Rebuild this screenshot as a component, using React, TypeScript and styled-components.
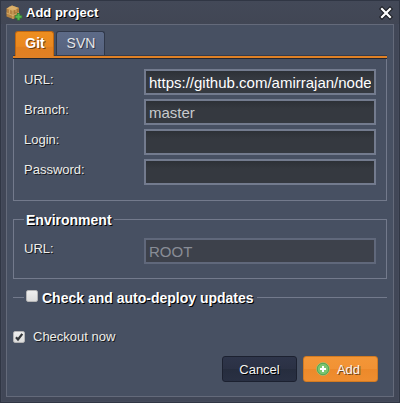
import React from "react";
import styled, { createGlobalStyle } from "styled-components";

const GlobalStyle = createGlobalStyle`
  * { box-sizing: border-box; }
  html, body { margin: 0; padding: 0; overflow: hidden; background: #414755; }
  body, input, button { font-family: "Liberation Sans", Arial, sans-serif; }
`;

const Dialog = styled.div`
  width: 400px;
  height: 403px;
  display: flex;
  flex-direction: column;
  padding: 0 5px 5px;
  border: 1px solid #303644;
  background: #414757;
  box-shadow: inset 0 0 0 1px #454b5b;
  color: #fff;
`;

const Header = styled.header`
  height: 23px;
  flex: none;
  display: flex;
  align-items: center;
  margin: 0 -5px;
  padding: 0 6px 0 5px;
  background: linear-gradient(#434958, #414654);
`;

const Title = styled.h1`
  flex: 1;
  margin: 1px 0 0 3px;
  font-size: 13px;
  line-height: 16px;
  font-weight: bold;
  text-shadow: 1px 1px 0 #000;
`;

const CloseButton = styled.button`
  width: 14px;
  height: 14px;
  padding: 0;
  border: 0;
  background: none;
  display: flex;
`;

const Body = styled.main`
  flex: 1;
  display: flex;
  flex-direction: column;
  border: 1px solid #646a7a;
  background: #475062;
  padding: 6px 6px 0;
`;

const TabBar = styled.nav`
  display: flex;
  gap: 2px;
  height: 25px;
  padding-left: 2px;
  border-bottom: 1px solid #343b4b;
`;

const Tab = styled.button<{ $active?: boolean }>`
  width: ${(p) => (p.$active ? 39 : 49)}px;
  height: ${(p) => (p.$active ? 25 : 24)}px;
  padding: 0 0 2px 1px;
  border: 1px solid ${(p) => (p.$active ? "#c0670f" : "#303849")};
  border-bottom: 0;
  border-radius: 3px 3px 0 0;
  background: ${(p) =>
    p.$active
      ? "linear-gradient(#ed8e20, #ea881f 60%, #e07f20 62%, #e08024)"
      : "linear-gradient(#5d6b88, #56627e)"};
  color: ${(p) => (p.$active ? "#fff" : "#e4e5e8")};
  font-size: 14px;
  line-height: 22px;
  font-weight: ${(p) => (p.$active ? "bold" : "normal")};
  text-shadow: 1px 1px 0 ${(p) => (p.$active ? "#744011" : "#30384a")};
`;

const TabLine = styled.div`
  height: 3px;
  flex: none;
  background: #e08125;
  border-bottom: 1px solid #222630;
`;

const RepositoryPanel = styled.section`
  height: 142px;
  flex: none;
  display: flex;
  flex-direction: column;
  gap: 4px;
  padding: 10px 10px 0;
  border: 1px solid #737a8c;
  border-top: 0;
`;

const Fieldset = styled.fieldset`
  height: 69px;
  flex: none;
  margin: 9px 0 0;
  padding: 10px 10px 0;
  min-width: 0;
  border: 1px solid #737a8c;
`;

const Legend = styled.legend`
  height: 18px;
  padding: 0 2px;
  font-size: 14px;
  line-height: 20px;
  font-weight: bold;
  text-shadow: 1px 1px 0 #000;
`;

const Field = styled.label`
  height: 26px;
  display: flex;
`;

const FieldName = styled.span`
  width: 120px;
  flex: none;
  font-size: 13px;
  line-height: 22px;
  color: #eeeeeb;
  text-shadow: 1px 1px 0 #17191d;
`;

const TextInput = styled.input<{ $bright?: boolean }>`
  width: 232px;
  height: 26px;
  padding: 0 3px;
  border: 2px solid #737b8e;
  border-radius: 0;
  outline: 0;
  background: linear-gradient(#2d3137, #353940 35%, #353940);
  color: ${(p) => (p.$bright ? "#fff" : "#c8cacd")};
  font-size: 15px;
  &:disabled {
    border-color: #60687b;
    background: #3d414b;
    color: #898d96;
  }
`;

const UpdatesRow = styled.label`
  height: 21px;
  margin-top: 8px;
  flex: none;
  display: flex;
  align-items: center;
`;

const Rule = styled.span<{ $lead?: boolean }>`
  height: 1px;
  flex: ${(p) => (p.$lead ? "0 0 11px" : "1")};
  background: #737a8c;
`;

const UpdatesTitle = styled.span`
  margin: 1px 3px 0 4px;
  font-size: 14px;
  line-height: 18px;
  font-weight: bold;
  text-shadow: 1px 1px 0 #000;
`;

const Check = styled.span<{ $inLegend?: boolean }>`
  width: 12px;
  height: 12px;
  flex: none;
  display: flex;
  margin: ${(p) => (p.$inLegend ? "0 0 3px 2px" : "0")};
  border: 1px solid #b5b5b6;
  border-radius: 2px;
  background: linear-gradient(#eee, #ddd);
  svg { overflow: visible; }
`;

const CheckoutRow = styled.label`
  height: 20px;
  flex: none;
  margin-top: 19px;
  display: flex;
  align-items: center;
  gap: 8px;
  font-size: 13px;
  color: #eeeeea;
  text-shadow: 1px 1px 0 #17191d;
`;

const CheckoutText = styled.span`
  padding-bottom: 2px;
`;

const Actions = styled.footer`
  display: flex;
  justify-content: flex-end;
  gap: 6px;
  margin-top: 9px;
  padding-right: 9px;
`;

const ActionButton = styled.button<{ $primary?: boolean }>`
  width: 75px;
  height: 26px;
  display: flex;
  align-items: center;
  justify-content: center;
  gap: 7px;
  padding: 0 ${(p) => (p.$primary ? 5 : 0)}px 0 0;
  border: 1px solid ${(p) => (p.$primary ? "#d37b21" : "#1c2130")};
  border-radius: 3px;
  background: ${(p) =>
    p.$primary
      ? "linear-gradient(#f39637, #f29234 50%, #ed892a 52%, #ef8e30)"
      : "linear-gradient(#2e354a, #2b3144 50%, #262d3e 52%, #293043)"};
  color: #f5f5f3;
  font-size: 13px;
  text-shadow: 1px 1px 0 ${(p) => (p.$primary ? "#744417" : "#000")};
`;

const BoxIcon = () => (
  <svg width="17" height="16" viewBox="0 0 17 16">
    <path d="M0.5 3.5 6 .5 13 3v8L7 14 .5 11.5Z" fill="#b58342" />
    <path d="M.5 3.5 6 .5 13 3 7 6Z" fill="#d9ae68" />
    <path d="m7 6 6-3v8l-6 3Z" fill="#a97838" />
    <path d="m3 2 7 2.3v3M3.5 4.5v4M.5 8 7 10.5l6-3M7 6v8" fill="none" stroke="#dcb574" strokeWidth=".8" />
    <path d="M12.5 8v7.5M8.8 11.8h7.5" stroke="#2d7931" strokeWidth="3.2" />
    <path d="M12.5 8.7v6M9.5 11.8h6" stroke="#58b651" strokeWidth="2" />
  </svg>
);

const CloseIcon = () => (
  <svg width="14" height="14" viewBox="0 0 14 14">
    <path d="m3 3 8 8m0-8-8 8" stroke="#1b1d22" strokeWidth="4.3" strokeLinecap="square" />
    <path d="m3 3 8 8m0-8-8 8" stroke="#fff" strokeWidth="2.2" strokeLinecap="square" />
  </svg>
);

const CheckIcon = () => (
  <svg width="10" height="10" viewBox="0 0 10 10">
    <path d="m2 5.2 2 2.3L8.3 1.8" fill="none" stroke="#34373a" strokeWidth="2.2" />
  </svg>
);

const AddIcon = () => (
  <svg width="14" height="14" viewBox="0 0 14 14">
    <circle cx="7" cy="7" r="6.4" fill="#7cc570" stroke="#b3bc70" strokeWidth=".8" />
    <circle cx="7" cy="7" r="5.7" fill="none" stroke="#4fa250" strokeWidth=".9" />
    <path d="M7 4v6M4 7h6" stroke="#fff" strokeWidth="2" />
  </svg>
);

const repositoryFields = [
  { name: "URL:", value: "https://github.com/amirrajan/node", bright: true },
  { name: "Branch:", value: "master" },
  { name: "Login:", value: "" },
  { name: "Password:", value: "" },
];

export default function App() {
  return (
    <>
      <GlobalStyle />
      <Dialog>
        <Header>
          <BoxIcon />
          <Title>Add project</Title>
          <CloseButton aria-label="Close"><CloseIcon /></CloseButton>
        </Header>
        <Body>
          <TabBar>
            <Tab $active>Git</Tab>
            <Tab>SVN</Tab>
          </TabBar>
          <TabLine />
          <RepositoryPanel>
            {repositoryFields.map((field) => (
              <Field key={field.name}>
                <FieldName>{field.name}</FieldName>
                <TextInput defaultValue={field.value} $bright={field.bright} />
              </Field>
            ))}
          </RepositoryPanel>
          <Fieldset>
            <Legend>Environment</Legend>
            <Field>
              <FieldName>URL:</FieldName>
              <TextInput defaultValue="ROOT" disabled />
            </Field>
          </Fieldset>
          <UpdatesRow>
            <Rule $lead />
            <Check $inLegend />
            <UpdatesTitle>Check and auto-deploy updates</UpdatesTitle>
            <Rule />
          </UpdatesRow>
          <CheckoutRow>
            <Check><CheckIcon /></Check>
            <CheckoutText>Checkout now</CheckoutText>
          </CheckoutRow>
          <Actions>
            <ActionButton>Cancel</ActionButton>
            <ActionButton $primary><AddIcon />Add</ActionButton>
          </Actions>
        </Body>
      </Dialog>
    </>
  );
}
